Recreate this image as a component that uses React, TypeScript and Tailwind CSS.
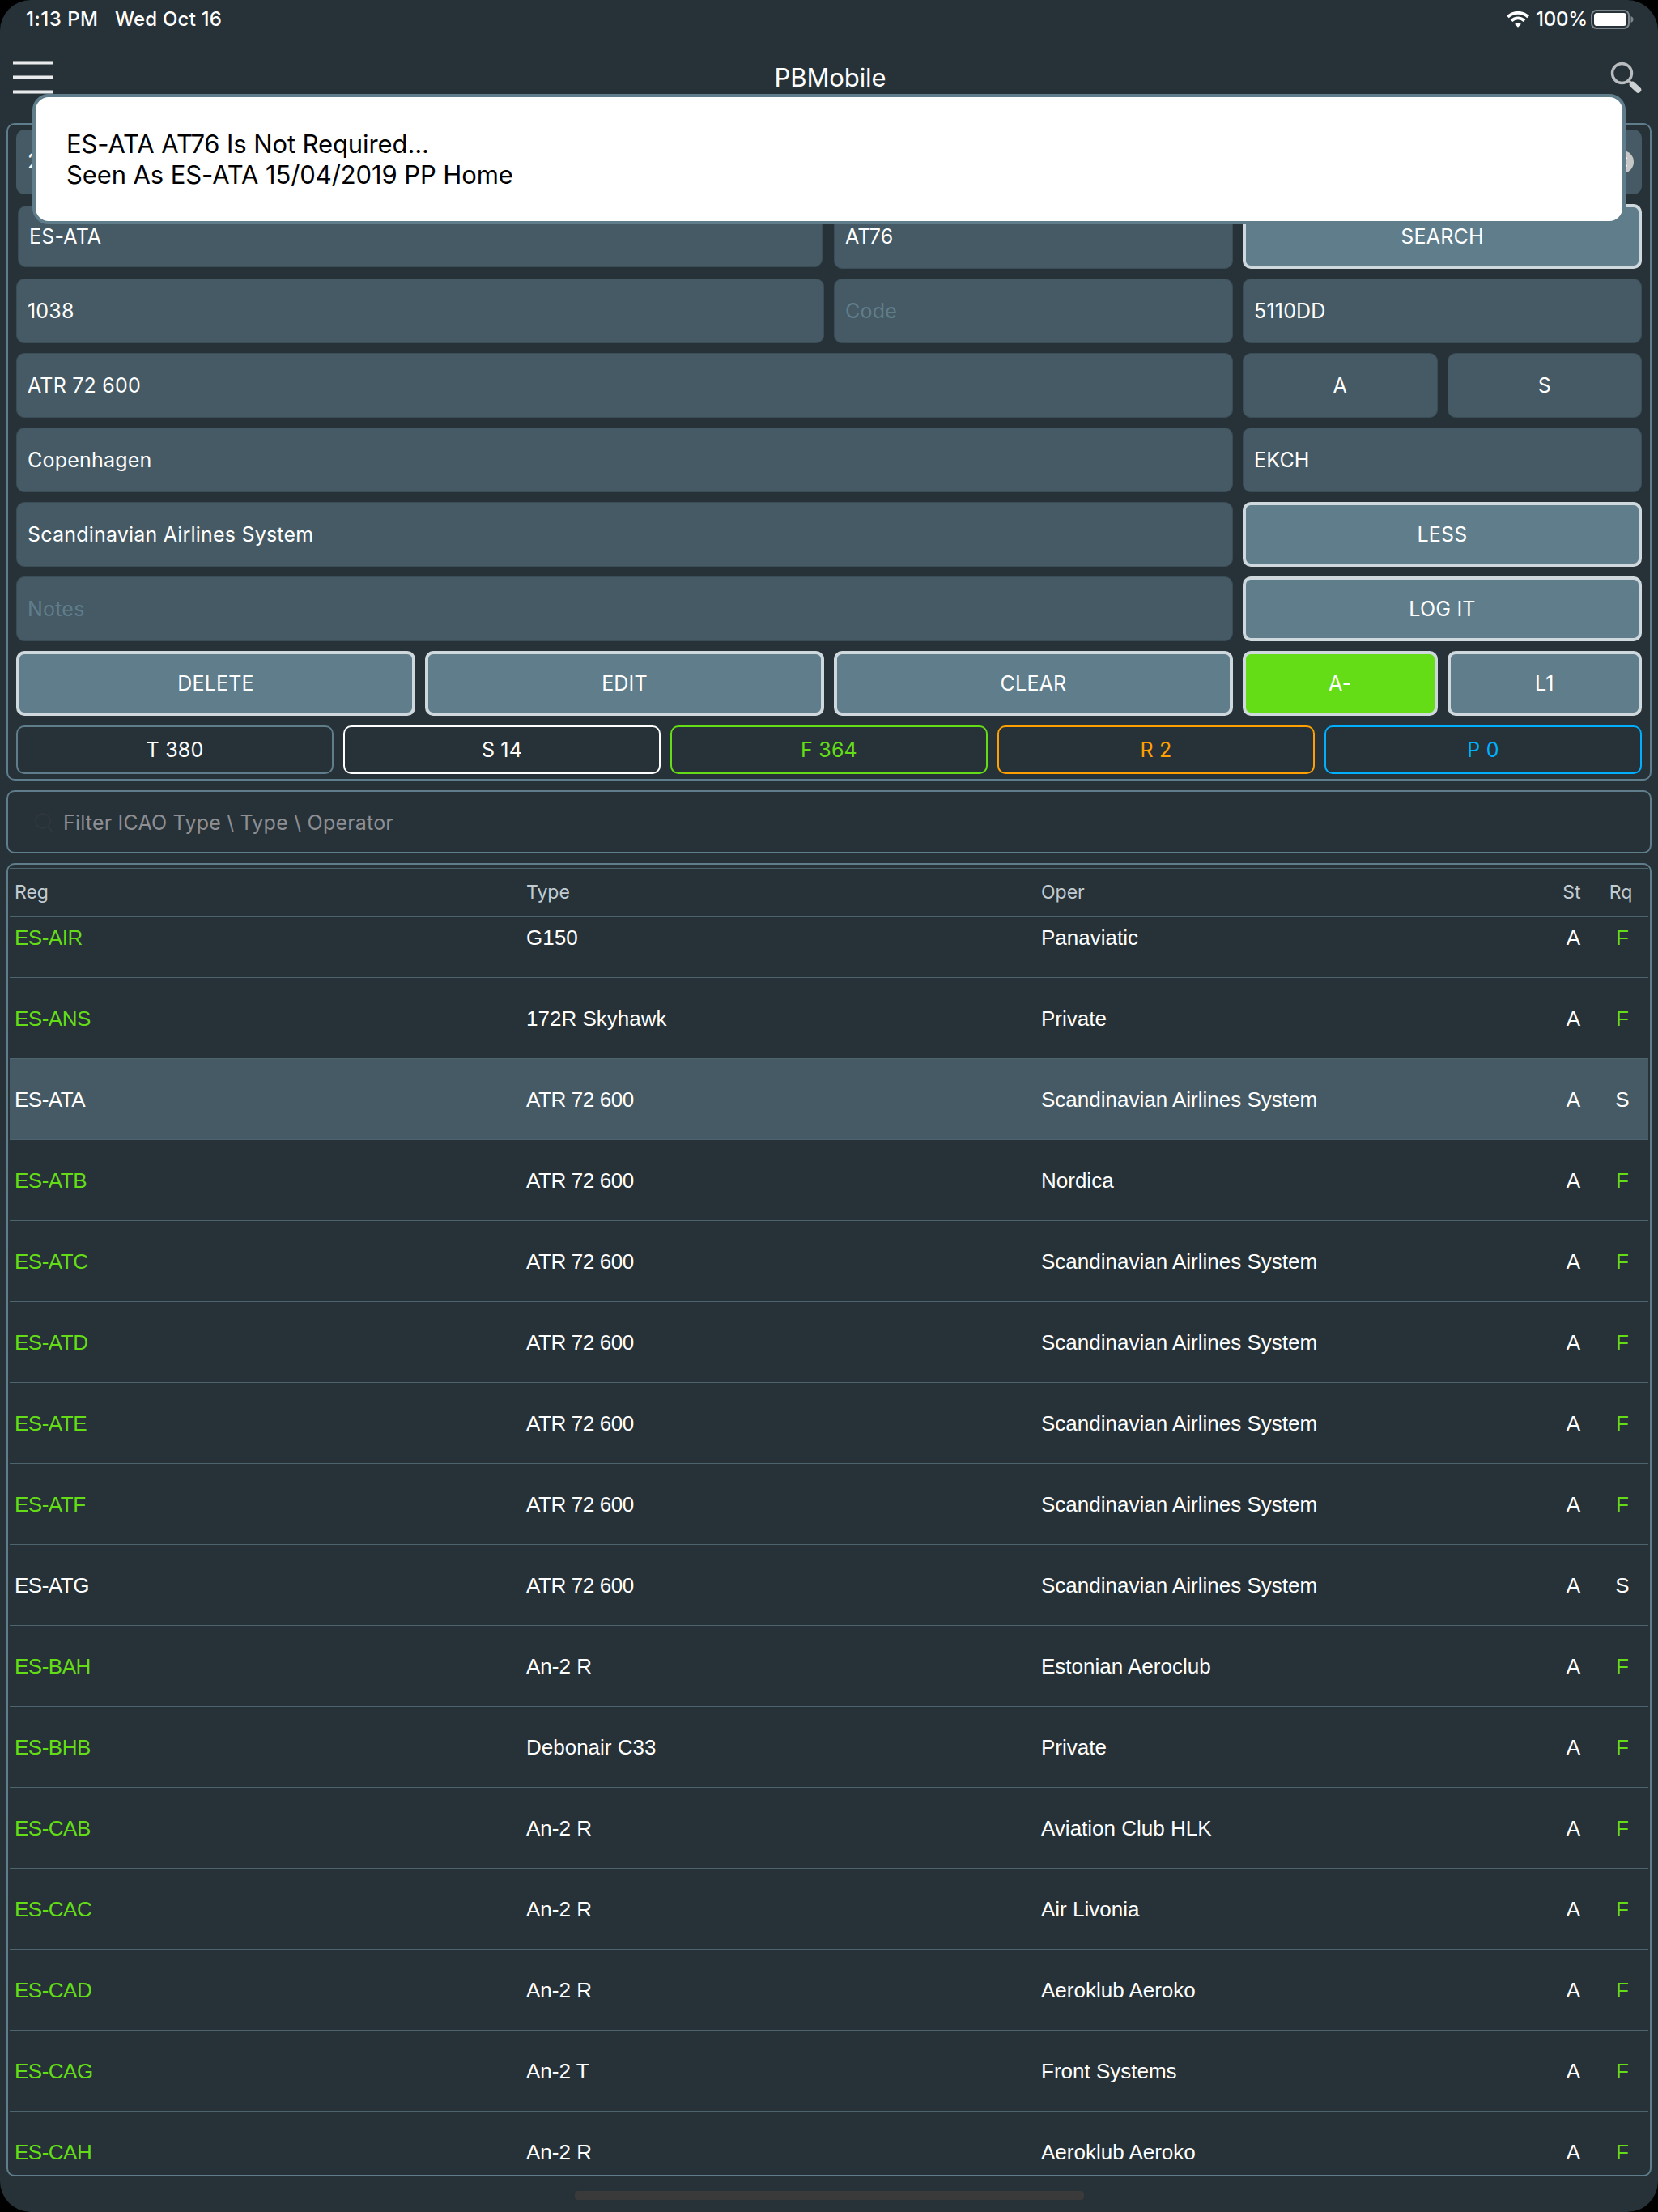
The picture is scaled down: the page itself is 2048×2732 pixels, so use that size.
import clsx from "clsx";

const rows = [
  ["ES-AIR", "G150", "Panaviatic", "F"],
  ["ES-ANS", "172R Skyhawk", "Private", "F"],
  ["ES-ATA", "ATR 72 600", "Scandinavian Airlines System", "S"],
  ["ES-ATB", "ATR 72 600", "Nordica", "F"],
  ["ES-ATC", "ATR 72 600", "Scandinavian Airlines System", "F"],
  ["ES-ATD", "ATR 72 600", "Scandinavian Airlines System", "F"],
  ["ES-ATE", "ATR 72 600", "Scandinavian Airlines System", "F"],
  ["ES-ATF", "ATR 72 600", "Scandinavian Airlines System", "F"],
  ["ES-ATG", "ATR 72 600", "Scandinavian Airlines System", "S"],
  ["ES-BAH", "An-2 R", "Estonian Aeroclub", "F"],
  ["ES-BHB", "Debonair C33", "Private", "F"],
  ["ES-CAB", "An-2 R", "Aviation Club HLK", "F"],
  ["ES-CAC", "An-2 R", "Air Livonia", "F"],
  ["ES-CAD", "An-2 R", "Aeroklub Aeroko", "F"],
  ["ES-CAG", "An-2 T", "Front Systems", "F"],
  ["ES-CAH", "An-2 R", "Aeroklub Aeroko", "F"],
];

const stats = [
  { label: "T 380", style: "border-[#607d8b] text-white" },
  { label: "S 14", style: "border-white text-white" },
  { label: "F 364", style: "border-[#64dd17] text-[#64dd17]" },
  { label: "R 2", style: "border-[#ffa000] text-[#ffa000]" },
  { label: "P 0", style: "border-[#00b0ff] text-[#00b0ff]" },
];

const columns = "grid grid-cols-[632px_636px_635px_57px_64px]";

function Field({ text, placeholder, className }: { text?: string; placeholder?: string; className?: string }) {
  return (
    <div className={clsx("flex h-20 items-center rounded-[10px] border border-[#3b4d57] bg-[#455a64] px-[13px] pt-[2px]", className)}>
      <span className={text ? "text-white" : "text-[#607d8b]"}>{text || placeholder}</span>
    </div>
  );
}

function Button({ label, className = "bg-[#607d8b]" }: { label: string; className?: string }) {
  return (
    <button className={clsx("flex h-20 items-center justify-center rounded-[10px] border-4 border-[#cfd8dc] pt-[2px] text-white", className)}>
      {label}
    </button>
  );
}

function StatusBar() {
  return (
    <div className="flex h-12 items-center pl-8 pr-[30px] text-[24px] font-medium text-white">
      <span className="w-[110px] whitespace-nowrap tracking-[0.5px]">1:13 PM</span>
      <span className="tracking-[0.2px]">Wed Oct 16</span>
      <div className="ml-auto flex items-center">
        <svg width="28" height="20" viewBox="0 0 28 20" fill="none" stroke="white" strokeWidth="3.8">
          <path d="M1.4 6.9a18 18 0 0 1 25.2 0" />
          <path d="M6 11.7a11.4 11.4 0 0 1 16 0" />
          <path d="M14 19.8l-3.9-4a5.6 5.6 0 0 1 7.800 0z" fill="white" stroke="none" />
        </svg>
        <span className="ml-2 w-[68px] tracking-[-0.2px]">100%</span>
        <svg width="53" height="24" viewBox="0 0 53 24">
          <rect x="1" y="1" width="46" height="22" rx="6" fill="none" stroke="#7d868b" strokeWidth="2" />
          <rect x="4" y="4" width="40" height="16" rx="3.5" fill="white" />
          <path d="M49.5 8c4 1.300 4 6.700 0 8z" fill="#7d868b" />
        </svg>
      </div>
    </div>
  );
}

function NavBar() {
  return (
    <div className="flex h-[104px] items-start justify-between pl-4 pr-5">
      <div className="mt-[27px] flex w-[50px] flex-col gap-[13px]">
        <div className="h-[5px] border-y border-[#8d9498] bg-[#e8eaeb]" />
        <div className="h-[5px] border-y border-[#8d9498] bg-[#e8eaeb]" />
        <div className="h-[5px] border-y border-[#8d9498] bg-[#e8eaeb]" />
      </div>
      <h1 className="mr-1 mt-[28px] text-[31px] leading-10 tracking-[-0.1px] text-white">PBMobile</h1>
      <svg className="mt-[29px]" width="39" height="38" viewBox="0 0 39 38" fill="none">
        <circle cx="14.500" cy="13.500" r="12" stroke="#b9bdbf" strokeWidth="3.4" />
        <path d="M22.500 22l4 4" stroke="#b9bdbf" strokeWidth="3" />
        <path d="M27.500 27.500l7 6.500" stroke="#cfd2d5" strokeWidth="7.500" strokeLinecap="round" />
      </svg>
    </div>
  );
}

function Toast() {
  return (
    <div className="absolute left-10 top-[116px] h-[161px] w-[1968px] rounded-[20px] border-4 border-[#607d8b] bg-white pl-[38px] pt-[39px] text-[31px] leading-[38px] tracking-[-0.1px] text-black">
      <p>ES-ATA AT76 Is Not Required...</p>
      <p>Seen As ES-ATA 15/04/2019 PP Home</p>
    </div>
  );
}

export default function App() {
  return (
    <div className="h-[2732px] w-[2048px] overflow-hidden bg-black">
      <div className="relative flex h-full flex-col rounded-[38px] bg-[#263238] font-['Inter',sans-serif]">
        <StatusBar />
        <NavBar />

        <div className="mx-2 flex h-[812px] flex-col gap-3 rounded-[10px] border-2 border-[#607d8b] px-[10px] pt-[6px] text-[25px] tracking-[0.2px]">
          <div className="grid grid-cols-8 gap-3">
            <div className="col-span-8 flex h-20 items-center justify-between rounded-[10px] bg-[#455a64] pl-[14px] pr-[10px] text-white">
              <span>2</span>
              <svg width="28" height="28" viewBox="0 0 28 28">
                <circle cx="14" cy="14" r="14" fill="#c7c7c7" />
                <path d="M8.500 8.500l11 11m0-11l-11 11" stroke="white" strokeWidth="2" />
              </svg>
            </div>

            <Field text="ES-ATA" className="col-span-4 my-[2px] ml-[2px] mr-[2px] h-[76px]" />
            <Field text="AT76" className="col-span-2" />
            <Button label="SEARCH" className="col-span-2 bg-[#607d8b]" />

            <Field text="1038" className="col-span-4" />
            <Field placeholder="Code" className="col-span-2" />
            <Field text="5110DD" className="col-span-2" />

            <Field text="ATR 72 600" className="col-span-6" />
            <Field text="A" className="justify-center" />
            <Field text="S" className="justify-center" />

            <Field text="Copenhagen" className="col-span-6" />
            <Field text="EKCH" className="col-span-2" />

            <Field text="Scandinavian Airlines System" className="col-span-6" />
            <Button label="LESS" className="col-span-2 bg-[#607d8b]" />

            <Field placeholder="Notes" className="col-span-6" />
            <Button label="LOG IT" className="col-span-2 bg-[#607d8b]" />

            <Button label="DELETE" className="col-span-2 bg-[#607d8b]" />
            <Button label="EDIT" className="col-span-2 bg-[#607d8b]" />
            <Button label="CLEAR" className="col-span-2 bg-[#607d8b]" />
            <Button label="A-" className="bg-[#64dd17]" />
            <Button label="L1" />
          </div>

          <div className="grid grid-cols-5 gap-3">
            {stats.map(stat => (
              <div key={stat.label} className={clsx("flex h-[60px] items-center justify-center rounded-[10px] border-2 pt-[2px]", stat.style)}>
                {stat.label}
              </div>
            ))}
          </div>
        </div>

        <div className="mx-2 mt-3 flex h-[78px] items-center rounded-[10px] border-2 border-[#607d8b] pl-[33px] pt-[3px] text-[25px] tracking-[0.2px] text-[#8e8e93]">
          <svg width="24" height="26" viewBox="0 0 24 26" fill="none" stroke="#2f363f" strokeWidth="2">
            <circle cx="10" cy="10" r="9" />
            <path d="M16 17l7 8" />
          </svg>
          <span className="ml-[11px]">Filter ICAO Type \ Type \ Operator</span>
        </div>

        <div className="mx-2 mt-3 flex h-[1622px] flex-col overflow-hidden rounded-[10px] border-2 border-[#607d8b] px-[2px] pt-1">
          <div className={clsx(columns, "h-[60px] shrink-0 items-center border-y border-[#4d646f] pt-px text-[23px] text-[#c1cbd1]")}>
            <span className="pl-[6px]">Reg</span>
            <span className="pl-[6px]">Type</span>
            <span className="pl-[6px]">Oper</span>
            <span className="pr-1 text-center">St</span>
            <span className="pr-1 text-center">Rq</span>
          </div>
          <div className="flex flex-1 flex-col overflow-hidden">
            {rows.map(([reg, type, oper, rq], i) => (
              <div
                key={reg}
                className={clsx(
                  columns,
                  "h-[100px] shrink-0 items-center border-b border-[#4d646f] pt-px font-['Liberation_Sans',Arial,sans-serif] text-[26px] text-white",
                  i === 0 && "-mt-6",
                  reg === "ES-ATA" && "bg-[#455a64]"
                )}
              >
                <span className={clsx("pl-[6px] tracking-[-0.5px]", rq === "F" && "text-[#64dd17]")}>{reg}</span>
                <span className={clsx("pl-[6px]", type.startsWith("ATR") && "tracking-[-0.4px]")}>{type}</span>
                <span className="pl-[6px]">{oper}</span>
                <span className="text-center">A</span>
                <span className={clsx("text-center", rq === "F" && "text-[#64dd17]")}>{rq}</span>
              </div>
            ))}
          </div>
        </div>

        <div className="mx-auto mt-[18px] h-[11px] w-[629px] rounded bg-[#3a3a3a]" />
        <Toast />
      </div>
    </div>
  );
}
